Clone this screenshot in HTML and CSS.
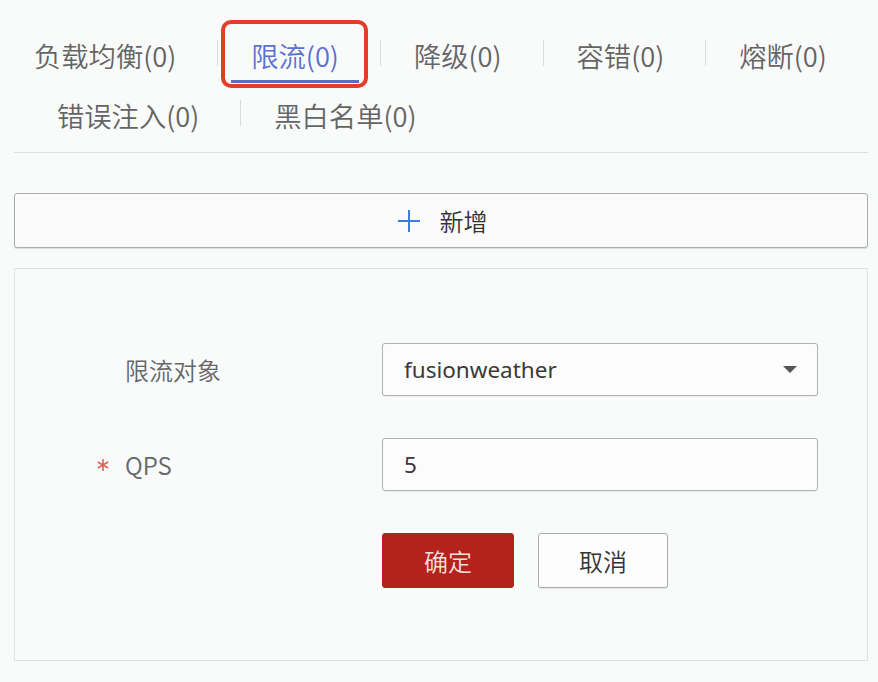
FILE: index.html
```html
<!DOCTYPE html>
<html lang="zh-CN">
<head>
<meta charset="utf-8">
<title>限流</title>
<link rel="stylesheet" href="styles.css">
</head>
<body>
<div class="page">
  <div class="tabs">
    <div class="tab-row">
      <div class="tab">负载均衡(0)</div>
      <span class="sep"></span>
      <div class="tab active">限流(0)<span class="highlight"></span></div>
      <span class="sep"></span>
      <div class="tab">降级(0)</div>
      <span class="sep"></span>
      <div class="tab">容错(0)</div>
      <span class="sep"></span>
      <div class="tab">熔断(0)</div>
    </div>
    <div class="tab-row second">
      <div class="tab">错误注入(0)</div>
      <span class="sep"></span>
      <div class="tab">黑白名单(0)</div>
    </div>
  </div>

  <button class="add-btn" type="button">
    <svg class="plus" width="24" height="24" viewBox="0 0 24 24"><path d="M12 1v22M1 12h22" stroke="#3b7ddd" stroke-width="2" fill="none"/></svg>
    <span>新增</span>
  </button>

  <div class="panel">
    <div class="form-row">
      <div class="label"><span class="star"></span>限流对象</div>
      <div class="field select">
        <span>fusionweather</span>
        <svg class="caret" width="14" height="7" viewBox="0 0 14 7"><path d="M0 0h14L7 7z" fill="#555"/></svg>
      </div>
    </div>
    <div class="form-row">
      <div class="label"><span class="star"><svg width="14" height="14" viewBox="0 0 14 14"><path d="M7 1v12M1.8 4l10.4 6M1.8 10l10.4-6" stroke="#e26258" stroke-width="1.6" fill="none"/></svg></span>QPS</div>
      <div class="field"><span>5</span></div>
    </div>
    <div class="form-row">
      <div class="label"></div>
      <div class="actions">
        <button class="btn primary" type="button">确定</button>
        <button class="btn" type="button">取消</button>
      </div>
    </div>
  </div>
</div>
</body>
</html>
```

FILE: styles.css
```css
* { box-sizing: border-box; }
html, body {
  margin: 0;
  padding: 0;
  background: #f9fafa;
}
body {
  font-family: "Noto Sans CJK SC", "Noto Sans", sans-serif;
  font-weight: 350;
  color: #333;
}
.page {
  padding: 0 10px 0 14px;
}
.tabs {
  padding-top: 27px;
  padding-bottom: 9px;
  border-bottom: 1px solid #dde0e3;
}
.tab-row {
  display: flex;
  align-items: center;
}
.tab-row.second {
  margin-top: 4px;
  padding-left: 23px;
}
.tab {
  position: relative;
  height: 56px;
  display: flex;
  align-items: center;
  padding: 0 20px;
  font-size: 27.3px;
  color: #646464;
  white-space: nowrap;
}
.tab.active {
  color: #5b70d3;
  box-shadow: inset 0 -3px 0 #5b6cc6;
}
.sep {
  width: 1px;
  height: 26px;
  background: #d9dbdd;
  margin: 0 13px 4px 21px;
}
.highlight {
  position: absolute;
  left: -10px;
  right: -9px;
  top: -7px;
  bottom: -5px;
  border: 4px solid #e23d27;
  border-radius: 10px;
}
.add-btn {
  display: flex;
  width: 100%;
  height: 55px;
  margin-top: 40px;
  align-items: center;
  justify-content: center;
  gap: 19px;
  background: #fbfbfb;
  border: 1px solid #a9adb1;
  border-radius: 3px;
  box-shadow: 0 1px 1px rgba(0,0,0,0.12);
  font-family: inherit;
  font-weight: 350;
  font-size: 24px;
  color: #333;
  padding: 0 0 0 2px;
}
.panel {
  margin-top: 20px;
  border: 1px solid #e1e3e5;
  padding: 74px 49px 72px 78px;
  display: flex;
  flex-direction: column;
  gap: 42px;
}
.form-row {
  display: flex;
  align-items: center;
}
.label {
  width: 289px;
  font-size: 24px;
  color: #666;
  display: flex;
  align-items: center;
}
.star {
  display: inline-flex;
  align-items: center;
  width: 32px;
  padding-left: 3px;
}
.field {
  flex: 1;
  height: 53px;
  border: 1px solid #aeb2b6;
  border-radius: 3px;
  background: #fcfcfc;
  box-shadow: 0 1px 1px rgba(0,0,0,0.06);
  display: flex;
  align-items: center;
  justify-content: space-between;
  padding: 0 20px 0 21px;
  font-family: "Noto Sans", "Noto Sans CJK SC", sans-serif;
  font-weight: 400;
  font-size: 22.5px;
  color: #3a3a3a;
}
.actions {
  display: flex;
  gap: 24px;
}
.btn {
  height: 55px;
  width: 130px;
  border: 1px solid #a9adb1;
  border-radius: 3px;
  background: #fdfdfd;
  font-family: inherit;
  font-weight: 350;
  font-size: 24px;
  color: #333;
  box-shadow: 0 1px 1px rgba(0,0,0,0.1);
}
.btn.primary {
  width: 132px;
  background: #b3231c;
  border-color: #b3231c;
  color: #f6dede;
  box-shadow: none;
}
```
